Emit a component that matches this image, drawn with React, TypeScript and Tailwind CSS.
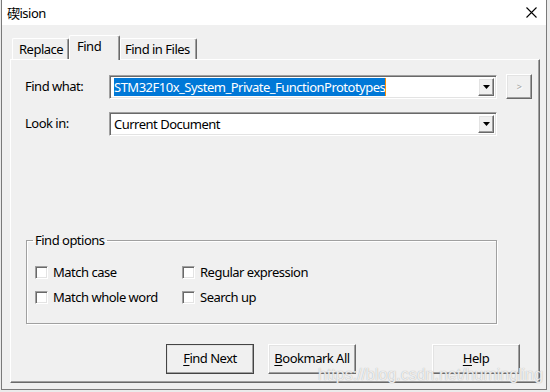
import React from "react";

const raised =
  "border border-t-white border-l-white border-r-[#696969] border-b-[#696969] shadow-[inset_-1px_-1px_0_#a0a0a0,inset_1px_1px_0_#e3e3e3]";
const sunken =
  "border border-t-[#a0a0a0] border-l-[#a0a0a0] border-r-white border-b-white shadow-[inset_1px_1px_0_#696969,inset_-1px_-1px_0_#e3e3e3]";

function DropArrow() {
  return (
    <div className={`w-[16px] h-full flex items-center justify-center bg-[#f0f0f0] ${raised}`}>
      <svg width="7" height="4" viewBox="0 0 7 4">
        <path d="M0 0 H7 L3.5 4 Z" fill="#000" />
      </svg>
    </div>
  );
}

function Check({ label }: { label: string }) {
  return (
    <div className="flex items-center h-[18px]">
      <div className={`w-[13px] h-[13px] bg-white ${sunken}`} />
      <span className="ml-[5px] text-[13px] leading-[18px] whitespace-nowrap">{label}</span>
    </div>
  );
}

function Btn({ first, rest, def }: { first: string; rest: string; def?: boolean }) {
  return (
    <div
      className={`w-[88px] h-[30px] flex items-center justify-center bg-[#f0f0f0] ${
        def ? "outline outline-1 outline-[#444] -outline-offset-1" : ""
      } ${raised} text-[13px]`}
    >
      <span className="whitespace-nowrap">
        <span className="underline underline-offset-2">{first}</span>
        {rest}
      </span>
    </div>
  );
}

export default function App() {
  return (
    <div className="relative w-[550px] h-[392px] bg-[#ebebeb] overflow-hidden font-['Noto_Sans','Noto_Sans_CJK_SC',sans-serif] tracking-[-0.5px] text-black">
      <div className="ml-[1px] w-[546px] h-[390px] flex flex-col border-l border-r border-b border-[#7a7a7a]">
        {/* title bar */}
        <div className="h-[25px] bg-white flex items-center justify-between pl-[5px] pr-[8px]">
          <span className="text-[13px] leading-none">
            <span className="font-['Noto_Sans_CJK_SC',sans-serif]">碶</span>ision
          </span>
          <svg width="11" height="11" viewBox="0 0 11 11" className="mr-[1px]">
            <path d="M0.5 0.5 L10.5 10.5 M10.5 0.5 L0.5 10.5" stroke="#000" strokeWidth="1.1" />
          </svg>
        </div>
        {/* body */}
        <div className="flex-1 bg-[#f0f0f0] pl-[8px] pt-[10px] pb-[6px] flex flex-col">
          {/* tabs */}
          <div className="flex items-start h-[24px] pl-[2px]">
            <div className="mt-[3px] h-[21px] w-[57px] pl-[6px] whitespace-nowrap border-t border-l border-r border-t-white border-l-white border-r-[#696969] rounded-t-[2px] text-[13px] leading-[20px] shadow-[inset_-1px_0_0_#a0a0a0]">
              Replace
            </div>
            <div className="relative z-10 h-[25px] w-[51px] pl-[7px] whitespace-nowrap bg-[#f0f0f0] border-t border-l border-r border-t-white border-l-white border-r-[#696969] rounded-t-[2px] text-[13px] leading-[20px] shadow-[inset_-1px_0_0_#a0a0a0]">
              Find
            </div>
            <div className="mt-[3px] h-[21px] w-[77px] pl-[4px] whitespace-nowrap border-t border-l border-r border-t-white border-l-white border-r-[#696969] rounded-t-[2px] text-[13px] leading-[20px] shadow-[inset_-1px_0_0_#a0a0a0]">
              Find in Files
            </div>
          </div>
          {/* tab page */}
          <div className="w-[530px] flex-1 flex flex-col border border-t-white border-l-white border-r-[#696969] border-b-[#696969] shadow-[inset_-1px_-1px_0_#a0a0a0]">
            {/* row 1 */}
            <div className="flex items-start mt-[14px] pl-[14px]">
              <div className="w-[84px] mt-[1px] h-[24px] flex items-center text-[13px]">Find what:</div>
              <div className={`mt-[1px] w-[388px] h-[24px] bg-white flex items-center ${sunken} p-[2px]`}>
                <div className="flex-1 flex items-center pl-[2px]">
                  <span className="bg-[#0078d7] text-white text-[13px] leading-[18px] border-r border-[#ff8c00]">
                    STM32F10x_System_Private_FunctionPrototypes
                  </span>
                </div>
                <DropArrow />
              </div>
              <div className={`ml-[9px] w-[26px] h-[25px] flex items-center justify-center ${raised}`}>
                <span className="text-[9px] text-[#a0a0a0] leading-none [text-shadow:1px_1px_0_#fff]">&gt;</span>
              </div>
            </div>
            {/* row 2 */}
            <div className="flex items-start mt-[13px] pl-[14px]">
              <div className="w-[84px] h-[24px] flex items-center text-[13px]">Look in:</div>
              <div className={`w-[388px] h-[24px] bg-white flex items-center ${sunken} p-[2px]`}>
                <div className="flex-1 pl-[2px] text-[13px] leading-[18px]">Current Document</div>
                <DropArrow />
              </div>
            </div>
            {/* group box */}
            <fieldset className="ml-[15px] mt-[95px] w-[471px] h-[93px] border border-[#a0a0a0] shadow-[inset_1px_1px_0_#fff,1px_1px_0_#fff] pl-[8px]">
              <legend className="ml-[-2px] px-[2px] text-[13px] leading-[18px]">Find options</legend>
              <div className="grid grid-cols-[147px_auto] gap-y-[7px] mt-[14px]">
                <Check label="Match case" />
                <Check label="Regular expression" />
                <Check label="Match whole word" />
                <Check label="Search up" />
              </div>
            </fieldset>
            {/* buttons */}
            <div className="flex mt-[20px] pl-[155px]">
              <Btn first="F" rest="ind Next" def />
              <div className="ml-[14px]">
                <Btn first="B" rest="ookmark All" />
              </div>
              <div className="ml-[76px]">
                <Btn first="H" rest="elp" />
              </div>
            </div>
          </div>
        </div>
      </div>
      <div className="absolute left-[318px] top-[366px] text-[16px] leading-[18px] tracking-normal font-['Liberation_Sans',sans-serif] text-white/80 [text-shadow:0_0_1px_#9a9a9a] pointer-events-none">
        https://blog.csdn.net/humingling
      </div>
    </div>
  );
}
